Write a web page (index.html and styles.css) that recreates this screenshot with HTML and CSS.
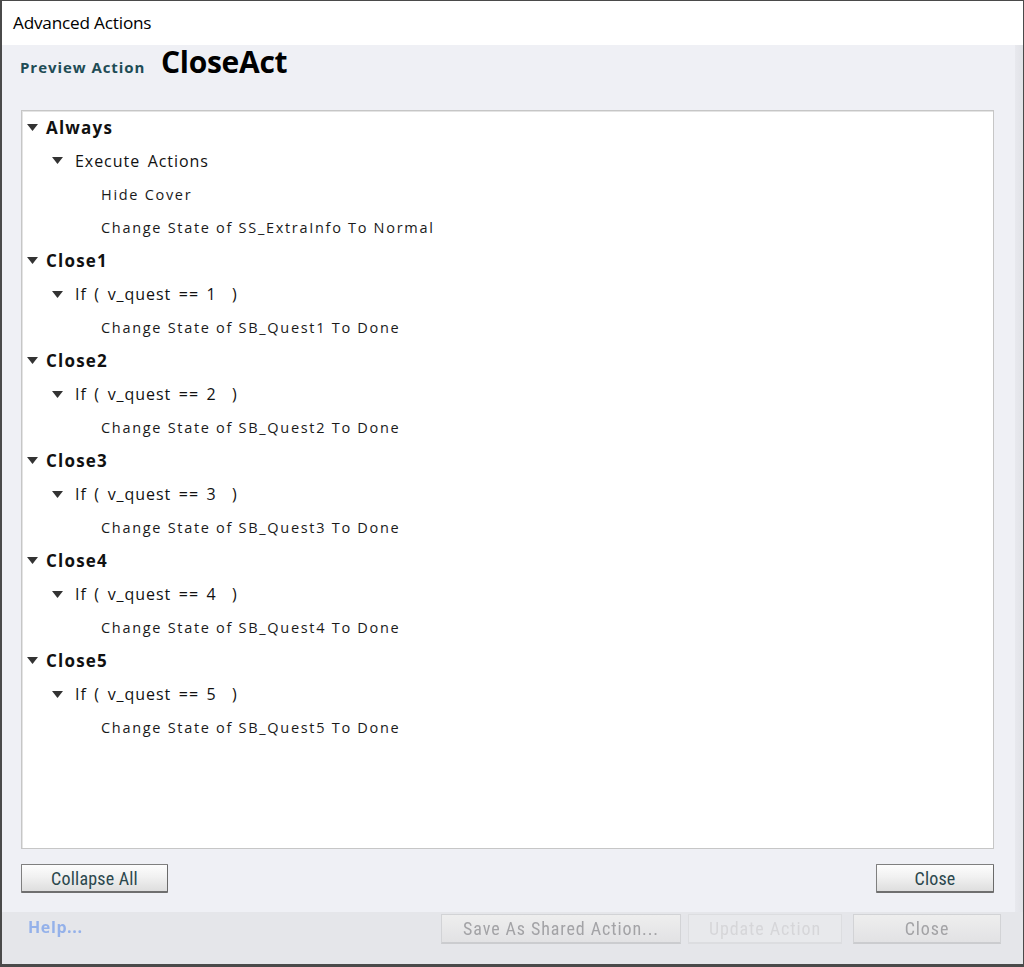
FILE: index.html
```html
<!DOCTYPE html>
<html>
<head>
<meta charset="utf-8">
<title>Advanced Actions</title>
<link rel="stylesheet" href="styles.css">
</head>
<body>
<div class="window">
  <div class="titlebar">Advanced Actions</div>
  <div class="client">
    <div class="outer-top">
      <div class="panel">
        <div class="header">
          <span class="preview-label">Preview Action</span>
          <span class="action-name">CloseAct</span>
        </div>
        <div class="tree">
          <div class="row l0"><svg class="tri" viewBox="0 0 11 7"><path d="M0 0H11L5.5 7Z"/></svg><span>Always</span></div>
          <div class="row l1"><svg class="tri" viewBox="0 0 11 7"><path d="M0 0H11L5.5 7Z"/></svg><span>Execute Actions</span></div>
          <div class="row l2"><span>Hide Cover</span></div>
          <div class="row l2"><span>Change State of SS_ExtraInfo To Normal</span></div>
          <div class="row l0"><svg class="tri" viewBox="0 0 11 7"><path d="M0 0H11L5.5 7Z"/></svg><span>Close1</span></div>
          <div class="row l1"><svg class="tri" viewBox="0 0 11 7"><path d="M0 0H11L5.5 7Z"/></svg><span>If ( v_quest == 1&nbsp; )</span></div>
          <div class="row l2"><span>Change State of SB_Quest1 To Done</span></div>
          <div class="row l0"><svg class="tri" viewBox="0 0 11 7"><path d="M0 0H11L5.5 7Z"/></svg><span>Close2</span></div>
          <div class="row l1"><svg class="tri" viewBox="0 0 11 7"><path d="M0 0H11L5.5 7Z"/></svg><span>If ( v_quest == 2&nbsp; )</span></div>
          <div class="row l2"><span>Change State of SB_Quest2 To Done</span></div>
          <div class="row l0"><svg class="tri" viewBox="0 0 11 7"><path d="M0 0H11L5.5 7Z"/></svg><span>Close3</span></div>
          <div class="row l1"><svg class="tri" viewBox="0 0 11 7"><path d="M0 0H11L5.5 7Z"/></svg><span>If ( v_quest == 3&nbsp; )</span></div>
          <div class="row l2"><span>Change State of SB_Quest3 To Done</span></div>
          <div class="row l0"><svg class="tri" viewBox="0 0 11 7"><path d="M0 0H11L5.5 7Z"/></svg><span>Close4</span></div>
          <div class="row l1"><svg class="tri" viewBox="0 0 11 7"><path d="M0 0H11L5.5 7Z"/></svg><span>If ( v_quest == 4&nbsp; )</span></div>
          <div class="row l2"><span>Change State of SB_Quest4 To Done</span></div>
          <div class="row l0"><svg class="tri" viewBox="0 0 11 7"><path d="M0 0H11L5.5 7Z"/></svg><span>Close5</span></div>
          <div class="row l1"><svg class="tri" viewBox="0 0 11 7"><path d="M0 0H11L5.5 7Z"/></svg><span>If ( v_quest == 5&nbsp; )</span></div>
          <div class="row l2"><span>Change State of SB_Quest5 To Done</span></div>
        </div>
        <div class="panel-buttons">
          <button class="btn btn-collapse">Collapse All</button>
          <button class="btn btn-close">Close</button>
        </div>
      </div>
      <div class="side-strip"></div>
    </div>
    <div class="footer">
      <span class="help">Help...</span>
      <div class="footer-buttons">
        <button class="fbtn fbtn-save">Save As Shared Action...</button>
        <button class="fbtn fbtn-update">Update Action</button>
        <button class="fbtn fbtn-close">Close</button>
      </div>
    </div>
  </div>
</div>
</body>
</html>
```

FILE: styles.css
```css
html, body {
  margin: 0;
  padding: 0;
  background: #5a6a4a;
}

.window {
  width: 1024px;
  height: 967px;
  box-sizing: border-box;
  border: 1px solid #4a4a4a;
  border-left-width: 2px;
  border-bottom-width: 3px;
  display: flex;
  flex-direction: column;
  background: #e5e6ea;
  overflow: hidden;
}

.titlebar {
  height: 44px;
  flex: none;
  background: #ffffff;
  font-family: "Open Sans", "Noto Sans", sans-serif;
  font-size: 17.2px;
  color: #000;
  padding-left: 11px;
  line-height: 44px;
  box-sizing: border-box;
  letter-spacing: -0.2px;
}

.client {
  flex: 1;
  display: flex;
  flex-direction: column;
  background: #e5e6ea;
}

.outer-top {
  display: flex;
  height: 867px;
  flex: none;
}

.panel {
  width: 1013px;
  background: #eff0f5;
  display: flex;
  flex-direction: column;
  box-sizing: border-box;
  padding-left: 19px;
}

.side-strip {
  flex: 1;
  background: linear-gradient(to right, #e8e9ee, #e1e2e7);
}

.header {
  height: 65px;
  display: flex;
  align-items: baseline;
  box-sizing: border-box;
}

.preview-label {
  font-family: "Open Sans", "Noto Sans", sans-serif;
  font-weight: bold;
  font-size: 15px;
  color: #1e4c55;
  margin-left: -1px;
  letter-spacing: 0.95px;
  line-height: 34px;
  width: 141px;
}

.action-name {
  font-family: "Open Sans", "Noto Sans", sans-serif;
  font-weight: bold;
  font-size: 30px;
  color: #000;
  letter-spacing: -0.3px;
  line-height: 34px;
}

.tree {
  width: 973px;
  height: 739px;
  box-sizing: border-box;
  background: #ffffff;
  border: 1px solid #c6c6c6;
  box-shadow: inset 1px 1px 0 #e4e4e4;
  padding-top: 0;
  color: #111;
}

.row {
  height: 33.33px;
  display: flex;
  align-items: center;
  white-space: nowrap;
}

.tri {
  width: 11px;
  height: 7px;
  fill: #333333;
  flex: none;
  margin-right: 8px;
}

.l0 {
  padding-left: 5px;
  font-family: "Open Sans", "Noto Sans", sans-serif;
  font-weight: bold;
  font-size: 17px;
  letter-spacing: 1.2px;
}

.l1 {
  padding-left: 30px;
  font-family: "Open Sans", "Noto Sans", sans-serif;
  font-size: 16px;
  letter-spacing: 0.95px;
  word-spacing: 2.5px;
}

.l1 .tri {
  margin-right: 12px;
}

.l2 {
  padding-left: 79px;
  font-family: "Open Sans", "Noto Sans", sans-serif;
  font-size: 14.5px;
  letter-spacing: 1.7px;
  color: #1a1a1a;
}

.panel-buttons {
  display: flex;
  justify-content: space-between;
  width: 973px;
  margin-top: 15px;
}

.btn {
  height: 29px;
  box-sizing: border-box;
  border: 1px solid #7f7f7f;
  border-right-color: #6a6a6a;
  border-bottom: 2px solid #6f6f6f;
  border-radius: 1px;
  background: linear-gradient(to bottom, #fdfdfd 0%, #f1f1f1 45%, #dedede 100%);
  font-family: "Liberation Sans Narrow", "Roboto Condensed", "Liberation Sans", sans-serif;
  font-size: 18px;
  color: #2b474d;
  padding: 0;
  letter-spacing: 0.2px;
}

.btn-collapse {
  width: 147px;
}

.btn-close {
  width: 118px;
}

.footer {
  flex: 1;
  display: flex;
  align-items: flex-start;
  justify-content: space-between;
  background: #e5e6ea;
  padding-top: 2px;
  padding-right: 22px;
  padding-left: 26px;
  filter: blur(0.7px);
}

.help {
  font-family: "Open Sans", "Noto Sans", sans-serif;
  font-weight: bold;
  font-size: 16px;
  color: #94b1ea;
  margin-top: 2px;
  letter-spacing: 0.6px;
}

.footer-buttons {
  display: flex;
  gap: 9px;
}

.fbtn {
  height: 30px;
  box-sizing: border-box;
  border: 1px solid #d2d3d6;
  border-bottom: 2px solid #cbcccf;
  background: linear-gradient(to bottom, #eeeeee, #e2e2e4);
  font-family: "Liberation Sans Narrow", "Roboto Condensed", "Liberation Sans", sans-serif;
  font-size: 18px;
  color: #a3a3a6;
  padding: 0;
  letter-spacing: 0.9px;
}

.fbtn-save {
  width: 240px;
  margin-right: -2px;
}

.fbtn-update {
  width: 154px;
  color: #d6d6d9;
  background: #e8e9ec;
  border-color: #dcdde0;
  margin-right: 2px;
}

.fbtn-close {
  width: 148px;
}
```
